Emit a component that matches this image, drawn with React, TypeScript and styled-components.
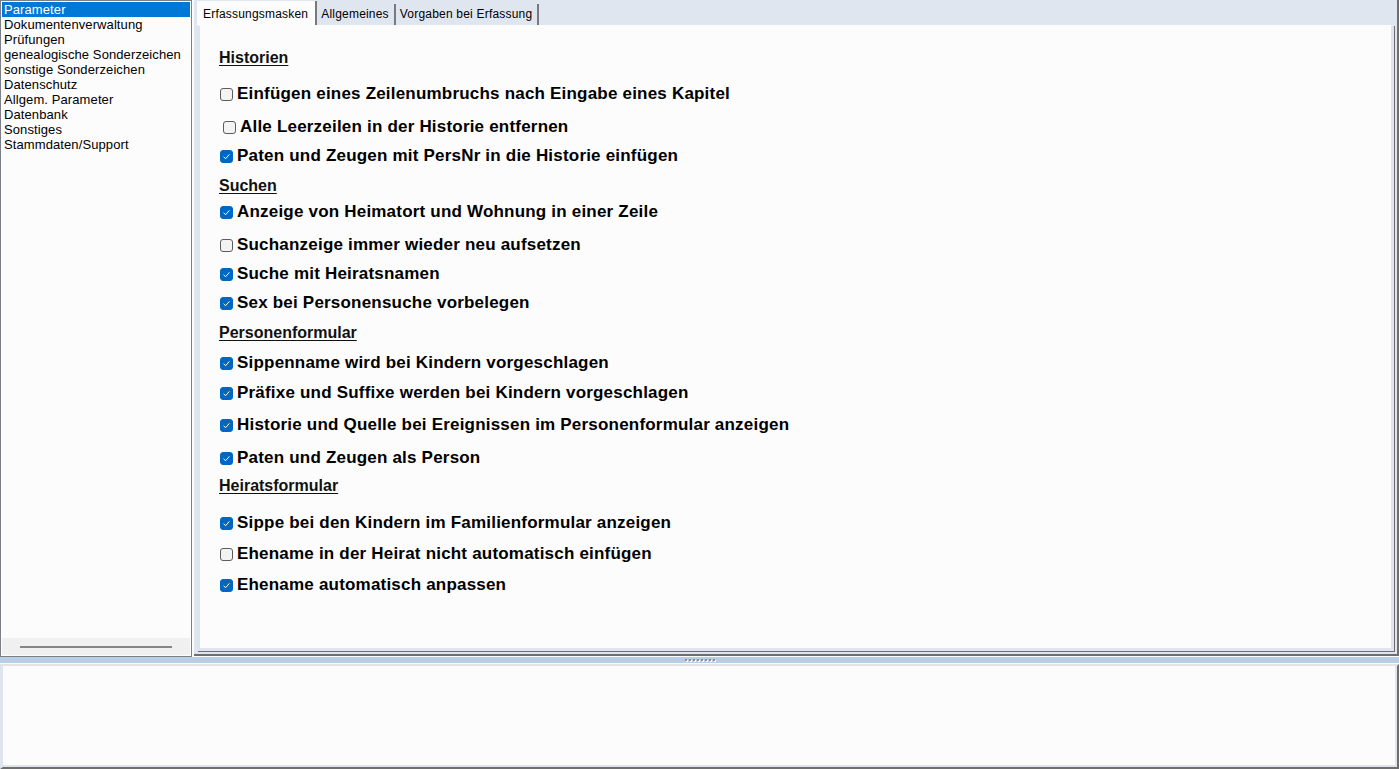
import React from 'react';
import styled, { createGlobalStyle } from 'styled-components';

const GlobalStyle = createGlobalStyle`
  html, body {
    margin: 0;
    padding: 0;
    background: #fcfcfc;
    overflow: hidden;
  }
  body {
    font-family: "Liberation Sans", Arial, sans-serif;
    color: #000;
  }
`;

const Window = styled.div`
  width: 1399px;
  height: 769px;
  display: flex;
  flex-direction: column;
  background: #fcfcfc;
`;

const TopArea = styled.div`
  height: 657px;
  display: flex;
  gap: 2px;
`;

const Sidebar = styled.div`
  width: 190px;
  border: 1px solid #7a7f88;
  display: flex;
  flex-direction: column;
  background: #fcfcfc;
`;

const NavList = styled.ul`
  flex: 1;
  list-style: none;
  margin: 0;
  padding: 1px 1px 0 1px;
`;

const NavItem = styled.li<{ selected?: boolean }>`
  height: 15px;
  line-height: 15px;
  font-size: 13px;
  letter-spacing: 0.1px;
  padding-left: 2px;
  white-space: nowrap;
  color: ${(p) => (p.selected ? '#fff' : '#000')};
  background: ${(p) => (p.selected ? '#0078d7' : 'transparent')};
`;

const HScroll = styled.div`
  height: 17px;
  margin: 0 1px 1px 1px;
  background: #f0f0f0;
  display: flex;
  align-items: center;
  padding-left: 18px;
`;

const ScrollThumb = styled.div`
  width: 152px;
  height: 2px;
  background: #858585;
`;

const TabControl = styled.div`
  flex: 1;
  display: flex;
  flex-direction: column;
  border-right: 2px solid #6e6e6e;
  border-bottom: 2px solid #6e6e6e;
  margin-bottom: 1px;
  background: #e0e6f0;
`;

const TabStrip = styled.div`
  height: 25px;
  display: flex;
  align-items: flex-end;
  padding-left: 3px;
  background: #e0e6f0;
`;

const Tab = styled.div<{ active?: boolean }>`
  height: ${(p) => (p.active ? '24px' : '21px')};
  line-height: ${(p) => (p.active ? '26px' : '21px')};
  font-size: 12px;
  letter-spacing: 0.2px;
  padding: ${(p) => (p.active ? '0 7px 0 6px' : '0 5px 0 4px')};
  background: ${(p) => (p.active ? '#fcfcfc' : 'transparent')};
  border-right: 2px solid #77797d;
  white-space: nowrap;
  box-sizing: border-box;
  color: #000;
`;

const PageFrame = styled.div`
  flex: 1;
  margin: 0 3px 3px 3px;
  border-top: 1px solid #fcfcfc;
  border-left: 3px solid #dfe5ef;
  border-bottom: 3px solid #dfe5ef;
  border-right: 3px solid #dfe5ef;
  box-shadow: 1px 1px 0 0 #6e6e6e;
  background: #fcfcfc;
  padding-left: 19px;
  display: flex;
  flex-direction: column;
`;

const SectionTitle = styled.div<{ gap: number }>`
  margin-top: ${(p) => p.gap}px;
  height: 18px;
  line-height: 18px;
  font-size: 16px;
  font-weight: bold;
  text-decoration: underline;
  text-underline-offset: 2px;
  color: #111;
`;

const OptionRow = styled.label<{ gap: number; indent?: number }>`
  margin-top: ${(p) => p.gap}px;
  padding-left: ${(p) => (p.indent ?? 0) + 1}px;
  height: 18px;
  display: flex;
  align-items: center;
  gap: 4px;
  font-size: 17px;
  letter-spacing: 0.2px;
  font-weight: bold;
  white-space: nowrap;
`;

const Box = styled.span<{ checked: boolean }>`
  width: 13px;
  height: 13px;
  box-sizing: border-box;
  border-radius: 3px;
  flex: none;
  display: flex;
  align-items: center;
  justify-content: center;
  border: 1px solid ${(p) => (p.checked ? '#0067c0' : '#5c5c5c')};
  background: ${(p) => (p.checked ? '#0067c0' : '#f3f3f3')};
`;

const Splitter = styled.div`
  height: 6px;
  background: #b9cde5;
  display: flex;
  align-items: center;
  justify-content: center;
  gap: 2px;
`;

const GripDot = styled.span`
  width: 2px;
  height: 2px;
  background: #8a8f99;
  box-shadow: 1px 1px 0 #fff;
`;

const BottomPanel = styled.div`
  flex: 1;
  margin-top: 1px;
  border-top: 2px solid #e4e4e4;
  border-left: 3px solid #dfe5ef;
  border-right: 2px solid #6e6e6e;
  border-bottom: 2px solid #6e6e6e;
  background: #fcfcfc;
  box-shadow: inset -2px -2px 0 #dfe5ef;
`;

const navItems = [
  'Parameter',
  'Dokumentenverwaltung',
  'Prüfungen',
  'genealogische Sonderzeichen',
  'sonstige Sonderzeichen',
  'Datenschutz',
  'Allgem. Parameter',
  'Datenbank',
  'Sonstiges',
  'Stammdaten/Support',
];

type Entry =
  | { kind: 'title'; text: string; gap: number }
  | { kind: 'option'; text: string; gap: number; checked: boolean; indent?: number };

const entries: Entry[] = [
  { kind: 'title', text: 'Historien', gap: 23 },
  { kind: 'option', text: 'Einfügen eines Zeilenumbruchs nach Eingabe eines Kapitel', gap: 18, checked: false },
  { kind: 'option', text: 'Alle Leerzeilen in der Historie entfernen', gap: 15, checked: false, indent: 3 },
  { kind: 'option', text: 'Paten und Zeugen mit PersNr in die Historie einfügen', gap: 11, checked: true },
  { kind: 'title', text: 'Suchen', gap: 12 },
  { kind: 'option', text: 'Anzeige von Heimatort und Wohnung in einer Zeile', gap: 8, checked: true },
  { kind: 'option', text: 'Suchanzeige immer wieder neu aufsetzen', gap: 15, checked: false },
  { kind: 'option', text: 'Suche mit Heiratsnamen', gap: 11, checked: true },
  { kind: 'option', text: 'Sex bei Personensuche vorbelegen', gap: 11, checked: true },
  { kind: 'title', text: 'Personenformular', gap: 12 },
  { kind: 'option', text: 'Sippenname wird bei Kindern vorgeschlagen', gap: 12, checked: true },
  { kind: 'option', text: 'Präfixe und Suffixe werden bei Kindern vorgeschlagen', gap: 12, checked: true },
  { kind: 'option', text: 'Historie und Quelle bei Ereignissen im Personenformular anzeigen', gap: 14, checked: true },
  { kind: 'option', text: 'Paten und Zeugen als Person', gap: 15, checked: true },
  { kind: 'title', text: 'Heiratsformular', gap: 10 },
  { kind: 'option', text: 'Sippe bei den Kindern im Familienformular anzeigen', gap: 19, checked: true },
  { kind: 'option', text: 'Ehename in der Heirat nicht automatisch einfügen', gap: 13, checked: false },
  { kind: 'option', text: 'Ehename automatisch anpassen', gap: 13, checked: true },
];

function CheckBox({ checked }: { checked: boolean }) {
  return (
    <Box checked={checked}>
      {checked && (
        <svg width="9" height="9" viewBox="0 0 9 9">
          <path d="M1.6 4.8 L3.6 6.7 L7.4 2.4" fill="none" stroke="#fff" strokeWidth="1" />
        </svg>
      )}
    </Box>
  );
}

export default function App() {
  return (
    <>
      <GlobalStyle />
      <Window>
        <TopArea>
          <Sidebar>
            <NavList>
              {navItems.map((item, i) => (
                <NavItem key={item} selected={i === 0}>
                  {item}
                </NavItem>
              ))}
            </NavList>
            <HScroll>
              <ScrollThumb />
            </HScroll>
          </Sidebar>
          <TabControl>
            <TabStrip>
              <Tab active>Erfassungsmasken</Tab>
              <Tab>Allgemeines</Tab>
              <Tab>Vorgaben bei Erfassung</Tab>
            </TabStrip>
            <PageFrame>
              {entries.map((e) =>
                e.kind === 'title' ? (
                  <SectionTitle key={e.text} gap={e.gap}>
                    {e.text}
                  </SectionTitle>
                ) : (
                  <OptionRow key={e.text} gap={e.gap} indent={e.indent}>
                    <CheckBox checked={e.checked} />
                    {e.text}
                  </OptionRow>
                )
              )}
            </PageFrame>
          </TabControl>
        </TopArea>
        <Splitter>
          {Array.from({ length: 8 }).map((_, i) => (
            <GripDot key={i} />
          ))}
        </Splitter>
        <BottomPanel />
      </Window>
    </>
  );
}
